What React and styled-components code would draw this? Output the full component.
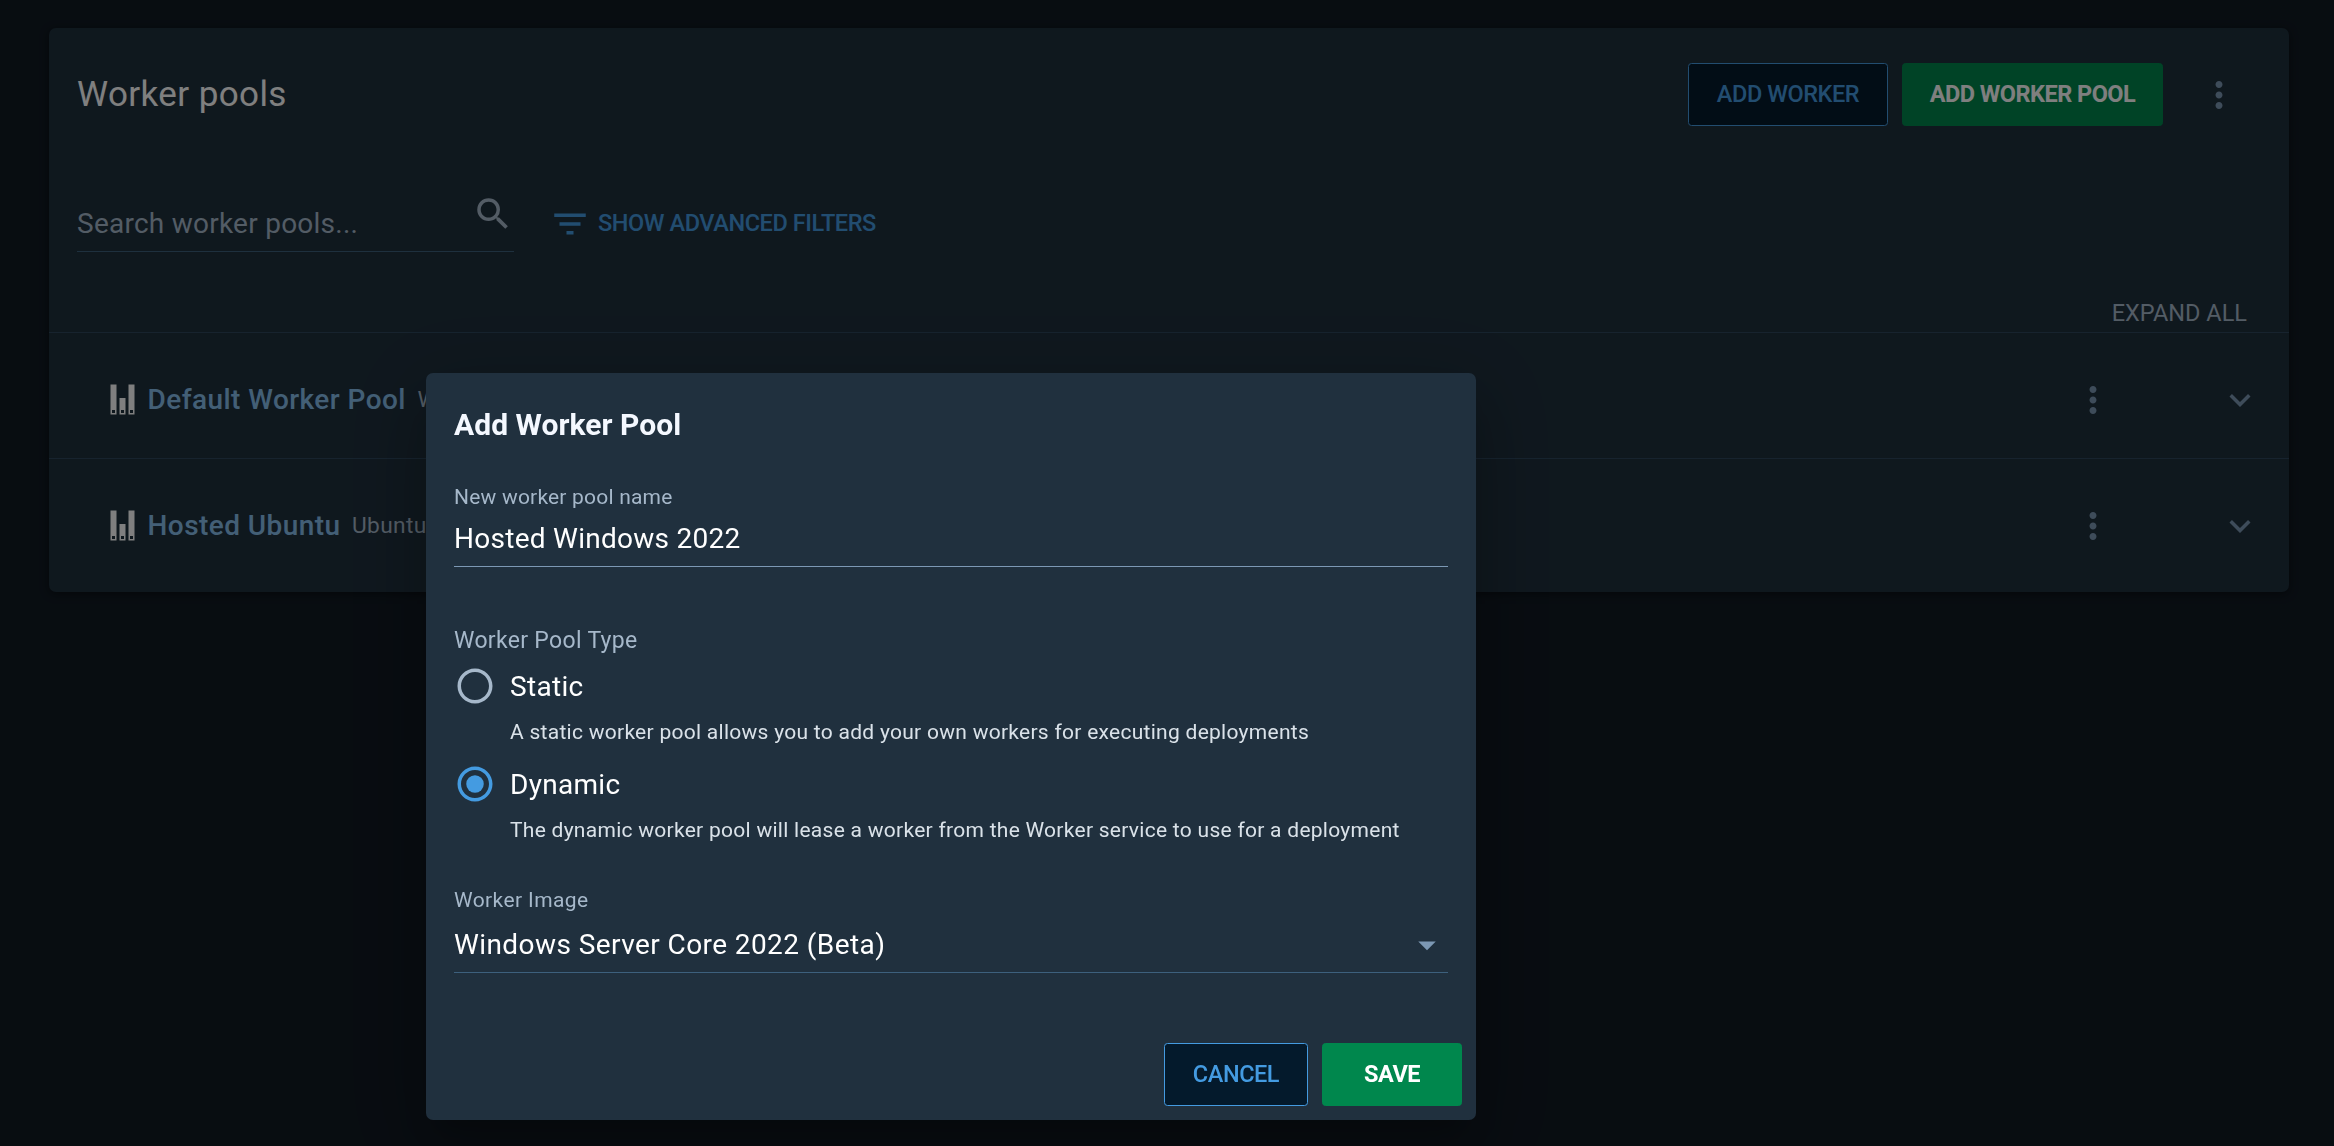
import React from "react";
import styled, { createGlobalStyle } from "styled-components";

const Global = createGlobalStyle`
  *, *::before, *::after { box-sizing: border-box; }
  body {
    margin: 0;
    background: #111a23;
    font-family: Roboto, "Liberation Sans", sans-serif;
    overflow: hidden;
  }
`;

const Page = styled.main`
  height: 1146px;
  padding: 28px 45px 0 49px;
`;

const Card = styled.section`
  height: 564px;
  border-radius: 7px;
  background: #1f303d;
  box-shadow: 0 2px 10px rgba(0, 0, 0, 0.45);
`;

const CardHeader = styled.header`
  display: flex;
  align-items: center;
  height: 133px;
  padding: 0 49px 0 28px;
`;

const Heading = styled.h1`
  margin: 0;
  flex: 1;
  color: #fff;
  font-size: 35px;
  font-weight: 400;
  letter-spacing: 0.4px;
  line-height: 42px;
`;

const Actions = styled.div`
  display: flex;
  align-items: center;
  gap: 14px;
`;

const Button = styled.button`
  width: ${(p) => p.$width}px;
  height: 63px;
  padding: 0 0 2px;
  border: 1px solid ${(p) => (p.$primary ? "#00874d" : "#449be1")};
  border-radius: 3.5px;
  background: ${(p) => (p.$primary ? "#00874d" : "#041a2c")};
  color: ${(p) => (p.$primary ? "#fff" : "#449be1")};
  font: ${(p) => (p.$primary ? 700 : 500)} 23.5px/28px Roboto, sans-serif;
  letter-spacing: ${(p) => (p.$primary ? -0.52 : -0.44)}px;
  white-space: nowrap;
`;

const Icon = styled.svg`
  display: block;
  flex: none;
  width: 42px;
  height: 42px;
  margin-top: ${(p) => p.$shift || 0}px;
  fill: ${(p) => p.$color || "#7c98b4"};
`;

const MenuSlot = styled.div`
  display: flex;
  margin-left: 21px;
`;

const Filters = styled.div`
  display: flex;
  align-items: flex-end;
  height: 91px;
  padding-left: 28px;
`;

const SearchBox = styled.div`
  display: flex;
  justify-content: space-between;
  width: 437px;
  height: 63px;
  border-bottom: 1px solid #3d607d;
  color: #a6b8ca;
  font-size: 28px;
  letter-spacing: 0.25px;
  line-height: 33px;
`;

const SearchText = styled.span`
  padding-top: 18px;
`;

const AdvancedToggle = styled.div`
  display: flex;
  align-items: center;
  gap: 7px;
  height: 42px;
  margin: 0 0 7px 35px;
  color: #449be1;
  font-size: 23.5px;
  font-weight: 500;
  letter-spacing: -0.42px;
`;

const AdvancedText = styled.span`
  padding-bottom: 3px;
`;

const ExpandRow = styled.div`
  display: flex;
  justify-content: flex-end;
  height: 80px;
  padding: 47px 42px 0 0;
  color: #a6b8ca;
  font-size: 23.5px;
  line-height: 28px;
`;

const PoolRow = styled.div`
  display: flex;
  align-items: center;
  height: 126px;
  padding: 8px 28px 0 61px;
  border-top: 1px solid #2e475d;
`;

const PoolIcon = styled.svg`
  display: block;
  flex: none;
  width: 25px;
  height: 31px;
`;

const PoolName = styled.span`
  margin-left: 12.5px;
  color: #87bfec;
  font-size: 28px;
  font-weight: 500;
  letter-spacing: 0.44px;
`;

const PoolImage = styled.span`
  flex: 1;
  margin-left: 11.5px;
  color: #a6b8ca;
  font-size: 22.75px;
  letter-spacing: 0.3px;
`;

const RowTools = styled.div`
  display: flex;
  gap: 105px;
`;

const Backdrop = styled.div`
  position: fixed;
  inset: 0;
  padding: 373px 0 0 426px;
  background: rgba(0, 0, 0, 0.5);
`;

const Dialog = styled.div`
  display: flex;
  flex-direction: column;
  width: 1050px;
  height: 747px;
  padding: 0 28px;
  border-radius: 7px;
  background: #20303e;
  box-shadow:
    0 19px 26px -12px rgba(0, 0, 0, 0.2),
    0 42px 66px 5px rgba(0, 0, 0, 0.14),
    0 16px 80px 14px rgba(0, 0, 0, 0.12);
`;

const DialogTitle = styled.h2`
  margin: 34px 0 0;
  color: #f4f8ff;
  font-size: 30px;
  font-weight: 700;
  letter-spacing: 0.05px;
  line-height: 36px;
`;

const Label = styled.div`
  margin-top: ${(p) => p.$top}px;
  color: #a6b8ca;
  font-size: ${(p) => p.$size || 21}px;
  letter-spacing: ${(p) => p.$spacing}px;
  line-height: 24px;
`;

const Field = styled.div`
  display: flex;
  align-items: flex-start;
  justify-content: space-between;
  height: ${(p) => p.$height}px;
  padding-top: ${(p) => p.$top}px;
  border-bottom: 1px solid ${(p) => p.$line};
  color: #fff;
  font-size: 28px;
  letter-spacing: ${(p) => p.$spacing}px;
  line-height: 32px;
`;

const Options = styled.div`
  display: flex;
  flex-direction: column;
  margin-top: 12px;
`;

const Option = styled.div`
  display: grid;
  grid-template: 42px 24px / 42px 1fr;
  gap: 13px 14px;
  height: 98px;
`;

const OptionName = styled.span`
  color: #fff;
  font-size: 28px;
  letter-spacing: 0.3px;
  line-height: 44px;
`;

const OptionNote = styled.span`
  grid-column: 2;
  color: #dae2e9;
  font-size: 21px;
  letter-spacing: 0.275px;
  line-height: 24px;
  white-space: nowrap;
`;

const DialogActions = styled.div`
  display: flex;
  justify-content: flex-end;
  gap: 14px;
  margin: 70px -14px 0 0;
`;

const Dots = () => (
  <Icon viewBox="0 0 24 24">
    <path d="M12 8c1.1 0 2-.9 2-2s-.9-2-2-2-2 .9-2 2 .9 2 2 2zm0 2c-1.1 0-2 .9-2 2s.9 2 2 2 2-.9 2-2-.9-2-2-2zm0 6c-1.1 0-2 .9-2 2s.9 2 2 2 2-.9 2-2-.9-2-2-2z" />
  </Icon>
);

const Bars = () => (
  <PoolIcon viewBox="0 0 25 31">
    <path
      fill="#fff"
      fillRule="evenodd"
      d="M.5.5h6v30h-6zM2 26v3h3v-3zM9.5 14h6v16.5h-6zM11 26v3h3v-3zM18.5.5h6v30h-6zM20 26v3h3v-3z"
    />
  </PoolIcon>
);

const Radio = ({ checked }) => (
  <Icon viewBox="0 0 24 24" $color={checked ? "#449be1" : "#a6b8ca"}>
    <path d="M12 2C6.48 2 2 6.48 2 12s4.48 10 10 10 10-4.48 10-10S17.52 2 12 2zm0 18c-4.42 0-8-3.58-8-8s3.58-8 8-8 8 3.58 8 8-3.58 8-8 8z" />
    {checked && <circle cx="12" cy="12" r="5" />}
  </Icon>
);

const pools = [
  { name: "Default Worker Pool", image: "Windows" },
  { name: "Hosted Ubuntu", image: "Ubuntu" },
];

export default function App() {
  return (
    <>
      <Global />
      <Page>
        <Card>
          <CardHeader>
            <Heading>Worker pools</Heading>
            <Actions>
              <Button $width={200}>ADD WORKER</Button>
              <Button $primary $width={261}>ADD WORKER POOL</Button>
              <MenuSlot>
                <Dots />
              </MenuSlot>
            </Actions>
          </CardHeader>
          <Filters>
            <SearchBox>
              <SearchText>Search worker pools...</SearchText>
              <Icon viewBox="0 0 24 24" $color="#a6b8ca" $shift={4}>
                <path d="M15.5 14h-.79l-.28-.27A6.471 6.471 0 0 0 16 9.5 6.5 6.5 0 1 0 9.5 16c1.61 0 3.09-.59 4.23-1.57l.27.28v.79l5 4.99L20.49 19l-4.99-5zm-6 0C7.01 14 5 11.99 5 9.5S7.01 5 9.5 5 14 7.01 14 9.5 11.99 14 9.5 14z" />
              </Icon>
            </SearchBox>
            <AdvancedToggle>
              <Icon viewBox="0 0 24 24" $color="#449be1">
                <path d="M10 18h4v-2h-4v2zM3 6v2h18V6H3zm3 7h12v-2H6v2z" />
              </Icon>
              <AdvancedText>SHOW ADVANCED FILTERS</AdvancedText>
            </AdvancedToggle>
          </Filters>
          <ExpandRow>EXPAND ALL</ExpandRow>
          {pools.map((pool) => (
            <PoolRow key={pool.name}>
              <Bars />
              <PoolName>{pool.name}</PoolName>
              <PoolImage>{pool.image}</PoolImage>
              <RowTools>
                <Dots />
                <Icon viewBox="0 0 24 24">
                  <path d="M16.59 8.59L12 13.17 7.41 8.59 6 10l6 6 6-6z" />
                </Icon>
              </RowTools>
            </PoolRow>
          ))}
        </Card>
      </Page>
      <Backdrop>
        <Dialog>
          <DialogTitle>Add Worker Pool</DialogTitle>
          <Label $top={42} $spacing={0.2}>New worker pool name</Label>
          <Field $height={58} $top={14} $line="#7c98b4" $spacing={0.27}>
            Hosted Windows 2022
          </Field>
          <Label $top={62} $size={23} $spacing={0.32}>Worker Pool Type</Label>
          <Options>
            <Option>
              <Radio />
              <OptionName>Static</OptionName>
              <OptionNote>A static worker pool allows you to add your own workers for executing deployments</OptionNote>
            </Option>
            <Option>
              <Radio checked />
              <OptionName>Dynamic</OptionName>
              <OptionNote>The dynamic worker pool will lease a worker from the Worker service to use for a deployment</OptionNote>
            </Option>
          </Options>
          <Label $top={27} $spacing={0.4}>Worker Image</Label>
          <Field $height={61} $top={17} $line="#3d607d" $spacing={0.42}>
            Windows Server Core 2022 (Beta)
            <Icon viewBox="0 0 24 24" $shift={-5.5}>
              <path d="M7 10l5 5 5-5z" />
            </Icon>
          </Field>
          <DialogActions>
            <Button $width={144}>CANCEL</Button>
            <Button $primary $width={140}>SAVE</Button>
          </DialogActions>
        </Dialog>
      </Backdrop>
    </>
  );
}
